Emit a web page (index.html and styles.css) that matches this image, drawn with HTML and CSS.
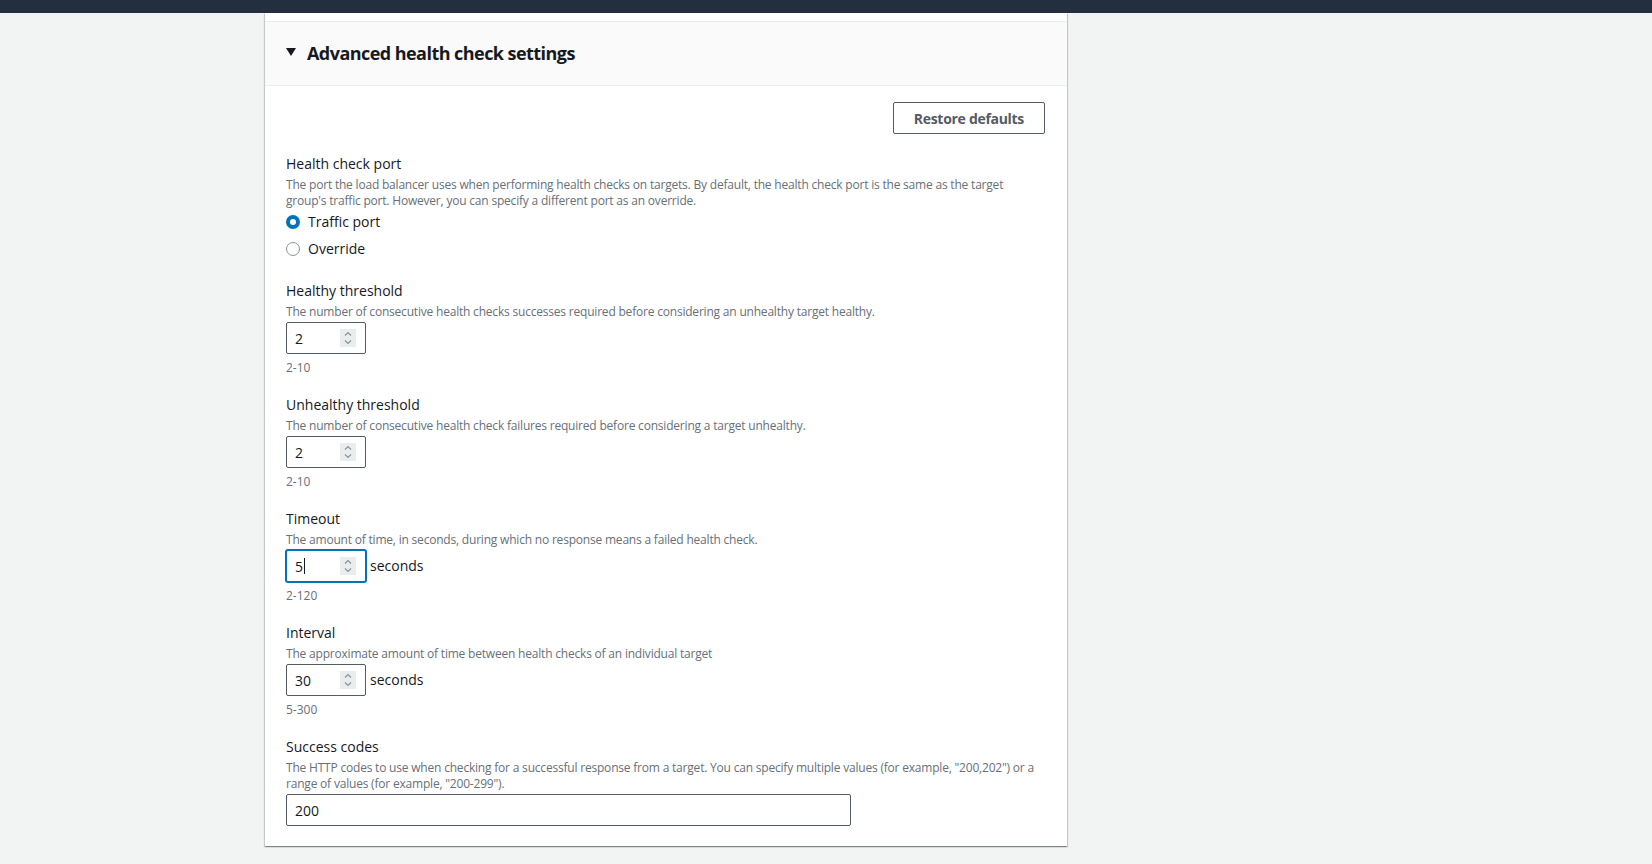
FILE: index.html
```html
<!DOCTYPE html>
<html lang="en">
<head>
<meta charset="utf-8">
<title>Advanced health check settings</title>
<link rel="stylesheet" href="styles.css">
</head>
<body>
<div class="topbar"></div>
<main class="page">
  <section class="panel">
    <div class="panel-prev"></div>
    <div class="panel-header">
      <svg class="expand-icon" width="10" height="8" viewBox="0 0 10 8"><polygon points="0,0 10,0 5,8" fill="#16191f"/></svg>
      <h2 class="panel-title">Advanced health check settings</h2>
    </div>
    <div class="panel-body">
      <div class="actions">
        <button class="btn" type="button">Restore defaults</button>
      </div>

      <div class="field">
        <div class="label">Health check port</div>
        <div class="desc">The port the load balancer uses when performing health checks on targets. By default, the health check port is the same as the target group's traffic port. However, you can specify a different port as an override.</div>
        <div class="radio-group">
          <div class="radio-row"><span class="radio radio-on"></span><span>Traffic port</span></div>
          <div class="radio-row"><span class="radio"></span><span>Override</span></div>
        </div>
      </div>

      <div class="field">
        <div class="label">Healthy threshold</div>
        <div class="desc">The number of consecutive health checks successes required before considering an unhealthy target healthy.</div>
        <div class="control">
          <div class="num-input"><span class="value">2</span>
            <svg class="spinner" width="16" height="18" viewBox="0 0 16 18"><rect width="16" height="18" fill="#eaeded"/><polyline points="5,6.5 8,3.5 11,6.5" fill="none" stroke="#879596" stroke-width="1.2"/><polyline points="5,11.5 8,14.5 11,11.5" fill="none" stroke="#879596" stroke-width="1.2"/></svg>
          </div>
        </div>
        <div class="constraint">2-10</div>
      </div>

      <div class="field">
        <div class="label">Unhealthy threshold</div>
        <div class="desc">The number of consecutive health check failures required before considering a target unhealthy.</div>
        <div class="control">
          <div class="num-input"><span class="value">2</span>
            <svg class="spinner" width="16" height="18" viewBox="0 0 16 18"><rect width="16" height="18" fill="#eaeded"/><polyline points="5,6.5 8,3.5 11,6.5" fill="none" stroke="#879596" stroke-width="1.2"/><polyline points="5,11.5 8,14.5 11,11.5" fill="none" stroke="#879596" stroke-width="1.2"/></svg>
          </div>
        </div>
        <div class="constraint">2-10</div>
      </div>

      <div class="field">
        <div class="label">Timeout</div>
        <div class="desc">The amount of time, in seconds, during which no response means a failed health check.</div>
        <div class="control">
          <div class="num-input focused"><span class="value">5</span><span class="cursor"></span>
            <svg class="spinner" width="16" height="18" viewBox="0 0 16 18"><rect width="16" height="18" fill="#eaeded"/><polyline points="5,6.5 8,3.5 11,6.5" fill="none" stroke="#879596" stroke-width="1.2"/><polyline points="5,11.5 8,14.5 11,11.5" fill="none" stroke="#879596" stroke-width="1.2"/></svg>
          </div>
          <span class="unit">seconds</span>
        </div>
        <div class="constraint">2-120</div>
      </div>

      <div class="field">
        <div class="label">Interval</div>
        <div class="desc">The approximate amount of time between health checks of an individual target</div>
        <div class="control">
          <div class="num-input"><span class="value">30</span>
            <svg class="spinner" width="16" height="18" viewBox="0 0 16 18"><rect width="16" height="18" fill="#eaeded"/><polyline points="5,6.5 8,3.5 11,6.5" fill="none" stroke="#879596" stroke-width="1.2"/><polyline points="5,11.5 8,14.5 11,11.5" fill="none" stroke="#879596" stroke-width="1.2"/></svg>
          </div>
          <span class="unit">seconds</span>
        </div>
        <div class="constraint">5-300</div>
      </div>

      <div class="field">
        <div class="label">Success codes</div>
        <div class="desc">The HTTP codes to use when checking for a successful response from a target. You can specify multiple values (for example, "200,202") or a range of values (for example, "200-299").</div>
        <div class="control">
          <div class="text-input"><span class="value">200</span></div>
        </div>
      </div>
    </div>
  </section>
</main>
</body>
</html>
```
FILE: styles.css
```css
* { box-sizing: border-box; }
html, body { margin: 0; padding: 0; }
body {
  background: #f2f3f3;
  font-family: "Open Sans", "Noto Sans", sans-serif;
  color: #16191f;
  height: 864px;
  overflow: hidden;
}
.topbar {
  height: 13px;
  background: #232f3e;
}
.page {
  padding-left: 265px;
}
.panel {
  width: 802px;
  background: #ffffff;
  box-shadow: 0 1px 1px 0 rgba(0,28,36,.3), 1px 1px 1px 0 rgba(0,28,36,.15), -1px 1px 1px 0 rgba(0,28,36,.15);
}
.panel-prev {
  height: 9px;
  border-bottom: 1px solid #eaeded;
}
.panel-header {
  height: 64px;
  background: #fafafa;
  border-bottom: 1px solid #eaeded;
  display: flex;
  align-items: center;
  padding: 0 20px 2px 21px;
  gap: 11px;
}
.expand-icon { flex: none; margin-top: -1px; }
.panel-title {
  margin: 0;
  font-size: 18px;
  font-weight: 700;
  line-height: 22px;
  letter-spacing: -0.55px;
}
.panel-body {
  padding: 16px 22px 20px 21px;
  display: flex;
  flex-direction: column;
  gap: 20px;
}
.actions {
  display: flex;
  justify-content: flex-end;
  margin-bottom: -1px;
}
.btn {
  height: 32px;
  padding: 0 20px;
  border: 1px solid #545b64;
  border-radius: 2px;
  background: #ffffff;
  color: #545b64;
  font-family: inherit;
  font-size: 14px;
  font-weight: 700;
  letter-spacing: -0.3px;
}
.field {
  display: flex;
  flex-direction: column;
}
.label {
  font-size: 14px;
  line-height: 22px;
  color: #16191f;
}
.desc {
  font-size: 12px;
  line-height: 16px;
  padding-top: 2px;
  color: #687078;
  letter-spacing: -0.2px;
}
.radio-group {
  margin-top: 2px;
  display: flex;
  flex-direction: column;
  gap: 5px;
}
.radio-row {
  display: flex;
  align-items: center;
  gap: 8px;
  font-size: 14px;
  line-height: 22px;
}
.radio {
  width: 14px;
  height: 14px;
  border-radius: 50%;
  border: 1.5px solid #879596;
  background: #fff;
  flex: none;
}
.radio-on {
  border: 4px solid #0073bb;
}
.control {
  margin-top: 2px;
  display: flex;
  align-items: center;
  gap: 4px;
}
.num-input, .text-input {
  height: 32px;
  border: 1px solid #545b64;
  border-radius: 2px;
  display: flex;
  align-items: center;
  padding-left: 8px;
  font-size: 14px;
  color: #16191f;
  background: #fff;
}
.num-input {
  width: 80px;
  position: relative;
}
.text-input {
  width: 565px;
}
.num-input.focused {
  border-color: #0073bb;
  box-shadow: 0 0 0 1px #0073bb;
}
.cursor {
  width: 1px;
  height: 16px;
  background: #16191f;
  margin-left: 1px;
}
.spinner {
  position: absolute;
  right: 9px;
  top: 6px;
}
.unit {
  font-size: 14px;
  line-height: 22px;
}
.constraint {
  margin-top: 6px;
  margin-bottom: -2px;
  font-size: 12px;
  line-height: 16px;
  color: #687078;
}
```
